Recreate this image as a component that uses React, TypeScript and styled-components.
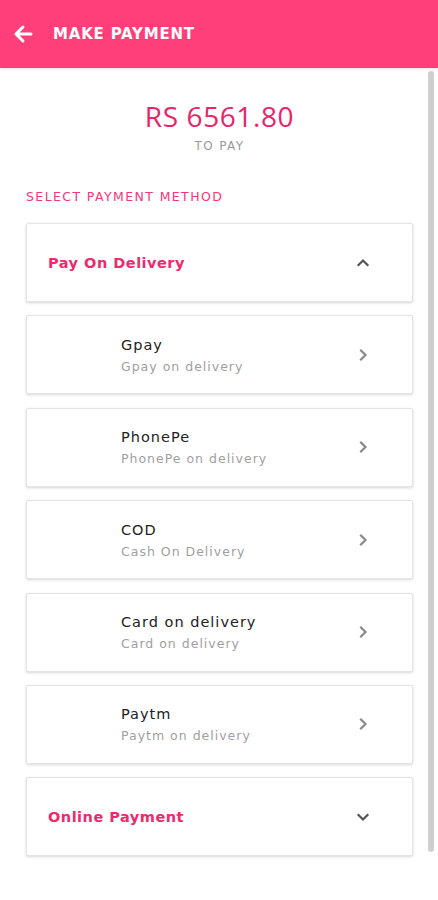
import React from 'react'
import styled, { createGlobalStyle } from 'styled-components'

const GlobalStyle = createGlobalStyle`
  body {
    margin: 0;
    background: #ffffff;
    font-family: 'DejaVu Sans', 'Open Sans', sans-serif;
  }
`

const Page = styled.div`
  position: relative;
  width: 438px;
  min-height: 900px;
  background: #ffffff;
`

const Header = styled.header`
  display: flex;
  align-items: center;
  height: 68px;
  padding: 0 12px;
  box-sizing: border-box;
  background: #ff3f7a;
  box-shadow: 0 1px 3px rgba(0, 0, 0, 0.12);
`

const BackButton = styled.button`
  display: flex;
  align-items: center;
  justify-content: center;
  width: 22px;
  height: 22px;
  padding: 0;
  border: none;
  background: transparent;
  color: #ffffff;
`

const HeaderTitle = styled.h1`
  margin: 0 0 0 19px;
  font-size: 15px;
  font-weight: 700;
  color: #ffffff;
  letter-spacing: 0.8px;
`

const Content = styled.main`
  padding: 0 25px 0 26px;
`

const Summary = styled.div`
  display: flex;
  flex-direction: column;
  align-items: center;
  padding-top: 30px;
`

const Amount = styled.span`
  font-family: 'Open Sans', sans-serif;
  font-size: 28px;
  font-weight: 400;
  color: #e8246a;
  line-height: 36px;
  letter-spacing: 0.6px;
`

const AmountLabel = styled.span`
  margin-top: 5px;
  font-size: 12px;
  color: #9a9a9a;
  letter-spacing: 1.4px;
`

const SectionLabel = styled.div`
  margin: 36px 0 19px;
  font-size: 12.5px;
  color: #f0387a;
  letter-spacing: 1.4px;
`

const List = styled.div`
  display: flex;
  flex-direction: column;
  gap: 13.4px;
`

const Card = styled.div`
  display: flex;
  align-items: center;
  height: 79px;
  box-sizing: border-box;
  border: 1px solid #e4e4e4;
  border-radius: 2px;
  background: #ffffff;
  box-shadow: 0 1px 3px rgba(0, 0, 0, 0.16);
`

interface CardBodyProps {
  indent: number
}

const CardBody = styled.div<CardBodyProps>`
  flex: 1;
  display: flex;
  flex-direction: column;
  padding-left: ${props => props.indent}px;
`

const GroupTitle = styled.span`
  font-size: 14.5px;
  font-weight: 700;
  color: #ec2a6e;
  letter-spacing: 0.5px;
`

const MethodTitle = styled.span`
  font-size: 14.5px;
  color: #222222;
  line-height: 20px;
  letter-spacing: 1px;
`

const MethodSub = styled.span`
  margin-top: 3px;
  font-size: 12.5px;
  color: #a0a0a0;
  line-height: 17px;
  letter-spacing: 1px;
`

const Chevron = styled.span`
  display: flex;
  width: 14px;
  margin-right: 42px;
  color: #666666;
`

const ScrollThumb = styled.div`
  position: absolute;
  top: 71px;
  left: 428px;
  width: 6px;
  height: 781px;
  border-radius: 3px;
  background: #cfcfcf;
`

type Dir = 'up' | 'down' | 'right'

const ChevronIcon = ({ dir }: { dir: Dir }): React.ReactElement => {
  const d = dir === 'up' ? 'M2.5 9 L7 4.5 L11.5 9' : dir === 'down' ? 'M2.5 5 L7 9.5 L11.5 5' : 'M5 2.5 L9.5 7 L5 11.5'
  return (
    <svg width="14" height="14" viewBox="0 0 14 14" fill="none">
      <path d={d} stroke={dir === 'right' ? '#8a8a8a' : '#555555'} strokeWidth="2.2" strokeLinecap="square" strokeLinejoin="miter" />
    </svg>
  )
}

const methods = [
  { title: 'Gpay', sub: 'Gpay on delivery' },
  { title: 'PhonePe', sub: 'PhonePe on delivery' },
  { title: 'COD', sub: 'Cash On Delivery' },
  { title: 'Card on delivery', sub: 'Card on delivery' },
  { title: 'Paytm', sub: 'Paytm on delivery' }
]

const App = (): React.ReactElement => {
  return (
    <Page>
      <GlobalStyle />
      <Header>
        <BackButton aria-label="Back">
          <svg width="20" height="20" viewBox="0 0 20 20" fill="none">
            <path d="M18 10 H3 M10 3 L3 10 L10 17" stroke="#ffffff" strokeWidth="3" strokeLinecap="round" strokeLinejoin="round" />
          </svg>
        </BackButton>
        <HeaderTitle>MAKE PAYMENT</HeaderTitle>
      </Header>
      <Content>
        <Summary>
          <Amount>RS 6561.80</Amount>
          <AmountLabel>TO PAY</AmountLabel>
        </Summary>
        <SectionLabel>SELECT PAYMENT METHOD</SectionLabel>
        <List>
          <Card>
            <CardBody indent={21}>
              <GroupTitle>Pay On Delivery</GroupTitle>
            </CardBody>
            <Chevron><ChevronIcon dir="up" /></Chevron>
          </Card>
          {methods.map(m => (
            <Card key={m.title}>
              <CardBody indent={94}>
                <MethodTitle>{m.title}</MethodTitle>
                <MethodSub>{m.sub}</MethodSub>
              </CardBody>
              <Chevron><ChevronIcon dir="right" /></Chevron>
            </Card>
          ))}
          <Card>
            <CardBody indent={21}>
              <GroupTitle>Online Payment</GroupTitle>
            </CardBody>
            <Chevron><ChevronIcon dir="down" /></Chevron>
          </Card>
        </List>
      </Content>
      <ScrollThumb />
    </Page>
  )
}

export default App
